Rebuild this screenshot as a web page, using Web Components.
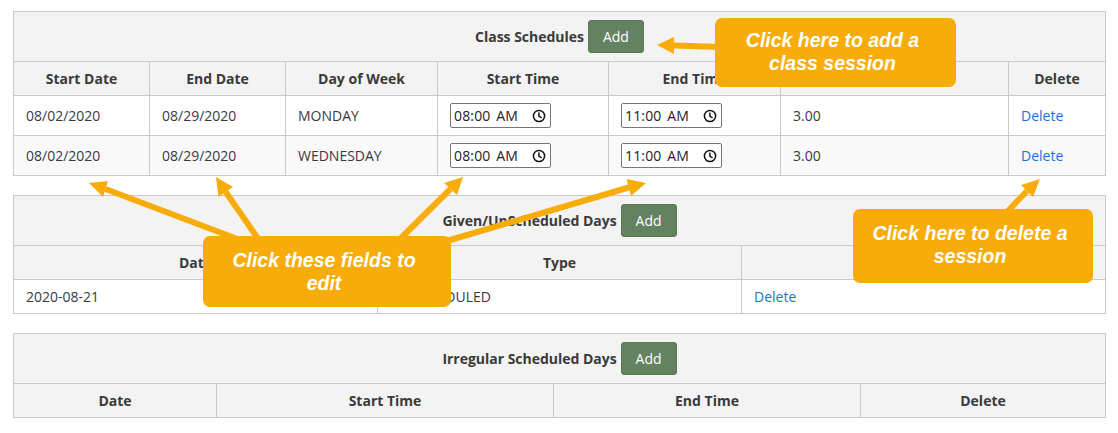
<!DOCTYPE html>
<html lang="en">
<head>
<meta charset="utf-8">
<title>Class Schedules</title>
<style>
	html, body { margin: 0; background: #fff; }
	body { font: 14px/21px "Open Sans", sans-serif; color: #3a3a3a; }
</style>
</head>
<body>
<schedule-page>
	<sched-table heading="Class Schedules" cols="136px 136px 152px 171px 172px 228px 96px">
		<sched-row head>
			<sched-cell>Start Date</sched-cell><sched-cell>End Date</sched-cell><sched-cell>Day of Week</sched-cell><sched-cell>Start Time</sched-cell><sched-cell>End Time</sched-cell><sched-cell>Duration</sched-cell><sched-cell>Delete</sched-cell>
		</sched-row>
		<sched-row>
			<sched-cell>08/02/2020</sched-cell><sched-cell>08/29/2020</sched-cell><sched-cell>MONDAY</sched-cell><sched-cell><time-field>08:00 AM</time-field></sched-cell><sched-cell><time-field>11:00 AM</time-field></sched-cell><sched-cell>3.00</sched-cell><sched-cell><delete-link></delete-link></sched-cell>
		</sched-row>
		<sched-row alt>
			<sched-cell>08/02/2020</sched-cell><sched-cell>08/29/2020</sched-cell><sched-cell>WEDNESDAY</sched-cell><sched-cell><time-field>08:00 AM</time-field></sched-cell><sched-cell><time-field>11:00 AM</time-field></sched-cell><sched-cell>3.00</sched-cell><sched-cell><delete-link></delete-link></sched-cell>
		</sched-row>
	</sched-table>
	<sched-table heading="Given/UnScheduled Days" cols="364px 364px 363px">
		<sched-row head>
			<sched-cell>Date</sched-cell><sched-cell>Type</sched-cell><sched-cell>Delete</sched-cell>
		</sched-row>
		<sched-row>
			<sched-cell>2020-08-21</sched-cell><sched-cell>UNSCHEDULED</sched-cell><sched-cell><delete-link></delete-link></sched-cell>
		</sched-row>
	</sched-table>
	<sched-table heading="Irregular Scheduled Days" cols="203px 337px 307px 244px">
		<sched-row head>
			<sched-cell>Date</sched-cell><sched-cell>Start Time</sched-cell><sched-cell>End Time</sched-cell><sched-cell>Delete</sched-cell>
		</sched-row>
	</sched-table>
	<help-arrows></help-arrows>
	<help-callout style="--x:715px;--y:18px;--w:241px;--h:69px;--pb:2px">Click here to add a class session</help-callout>
	<help-callout style="--x:203px;--y:236px;--w:248px;--h:71px">Click these fields to edit</help-callout>
	<help-callout style="--x:853px;--y:209px;--w:240px;--h:74px;--pb:2px">Click here to delete a session</help-callout>
</schedule-page>

<script>
const html = String.raw;

class SchedulePage extends HTMLElement {
	constructor() {
		super();
		this.attachShadow({ mode: 'open' }).innerHTML = html`
			<style>
				:host {
					display: flex;
					flex-direction: column;
					gap: 19px;
					position: relative;
					width: 1093px;
					height: 422px;
					padding: 11px 12px 0 13px;
				}
			</style>
			<slot></slot>
		`;
	}
}

class SchedTable extends HTMLElement {
	constructor() {
		super();
		this.attachShadow({ mode: 'open' }).innerHTML = html`
			<style>
				:host {
					display: block;
					border: 1px solid #c9c9c9;
					border-bottom: 0;
				}
				.title {
					display: flex;
					justify-content: center;
					align-items: center;
					gap: 4px;
					height: 49px;
					background: #f3f3f3;
					border-bottom: 1px solid #c9c9c9;
					font-weight: 700;
					letter-spacing: -.02px;
				}
				button {
					width: 56px;
					height: 33px;
					padding: 0;
					background: #638260;
					border: 1px solid #5a7758;
					border-radius: 3px;
					color: #fff;
					font: 400 14px/21px "Open Sans", sans-serif;
				}
			</style>
			<div class="title"><span id="heading"></span><button type="button">Add</button></div>
			<slot></slot>
		`;
	}

	connectedCallback() {
		this.shadowRoot.getElementById('heading').textContent = this.getAttribute('heading');
		this.style.setProperty('--cols', this.getAttribute('cols'));
	}
}

class SchedRow extends HTMLElement {
	constructor() {
		super();
		this.attachShadow({ mode: 'open' }).innerHTML = html`
			<style>
				:host {
					display: grid;
					grid-template-columns: var(--cols);
					border-bottom: 1px solid #c9c9c9;
					background: #fff;
					--cell-justify: flex-start;
				}
				:host([alt]) { background: #f9f9f9; }
				:host([head]) {
					background: #f3f3f3;
					font-weight: 700;
					--cell-justify: center;
				}
			</style>
			<slot></slot>
		`;
	}
}

class SchedCell extends HTMLElement {
	constructor() {
		super();
		this.attachShadow({ mode: 'open' }).innerHTML = html`
			<style>
				:host {
					display: flex;
					align-items: center;
					justify-content: var(--cell-justify);
					padding: 6px 12px;
					border-right: 1px solid #c9c9c9;
					min-width: 0;
				}
				:host(:last-child) { border-right: 0; }
			</style>
			<slot></slot>
		`;
	}
}

class TimeField extends HTMLElement {
	constructor() {
		super();
		this.attachShadow({ mode: 'open' }).innerHTML = html`
			<style>
				:host {
					display: flex;
					align-items: center;
					justify-content: space-between;
					box-sizing: border-box;
					width: 101px;
					height: 25px;
					margin: 1px 0;
					padding: 0 4px 0 3px;
					background: #fff;
					border: 1px solid #767676;
					border-radius: 2px;
					color: #222;
					word-spacing: 2px;
					letter-spacing: .15px;
				}
				svg { display: block; flex: none; }
			</style>
			<slot></slot>
			<svg width="14" height="14" viewBox="0 0 14 14" fill="none" stroke="#111" stroke-width="1.5" aria-hidden="true">
				<circle cx="7" cy="7" r="5.6"/>
				<path d="M6.9 3.6V7.2L9.6 9"/>
			</svg>
		`;
	}
}

class DeleteLink extends HTMLElement {
	constructor() {
		super();
		this.attachShadow({ mode: 'open' }).innerHTML = html`
			<style>
				:host { display: inline; }
				a { color: #1a73d4; text-decoration: none; }
			</style>
			<a href="#">Delete</a>
		`;
	}
}

class HelpCallout extends HTMLElement {
	constructor() {
		super();
		this.attachShadow({ mode: 'open' }).innerHTML = html`
			<style>
				:host {
					position: absolute;
					left: var(--x);
					top: var(--y);
					width: var(--w);
					height: var(--h);
					box-sizing: border-box;
					display: flex;
					align-items: center;
					justify-content: center;
					padding: 0 20px var(--pb, 0) 14px;
					background: #f8ac09;
					border-radius: 7px;
					color: #fff;
					font: italic 700 19.5px/23px "Liberation Sans", Arial, sans-serif;
					text-align: center;
				}
			</style>
			<div><slot></slot></div>
		`;
	}
}

// arrow shapes: tip, the two wings, then where the shaft meets the callout
const ARROWS = [
	{ tip: [657, 45], wings: [[674, 37], [674, 54]], tail: [720, 47] },
	{ tip: [89, 183], wings: [[108, 181], [103, 197]], tail: [240, 240] },
	{ tip: [216, 177], wings: [[233, 187], [218.5, 197]], tail: [259, 240] },
	{ tip: [463, 177], wings: [[444, 183], [457, 195]], tail: [399, 240] },
	{ tip: [646, 183], wings: [[626.5, 179], [631, 196]], tail: [440, 243] },
	{ tip: [1040, 179], wings: [[1021, 185], [1033, 197]], tail: [1005, 214] }
];

class HelpArrows extends HTMLElement {
	constructor() {
		super();
		const shapes = ARROWS.map(({ tip, wings, tail }) => {
			const mid = [(wings[0][0] + wings[1][0]) / 2, (wings[0][1] + wings[1][1]) / 2];
			return html`
				<line x1="${mid[0]}" y1="${mid[1]}" x2="${tail[0]}" y2="${tail[1]}" stroke="#f8ac09" stroke-width="6"/>
				<polygon points="${tip.join()} ${wings[0].join()} ${wings[1].join()}" fill="#f8ac09"/>
			`;
		}).join('');
		this.attachShadow({ mode: 'open' }).innerHTML = html`
			<style>
				:host {
					position: absolute;
					inset: 0;
					pointer-events: none;
				}
				svg { display: block; }
			</style>
			<svg width="1118" height="433" viewBox="0 0 1118 433" aria-hidden="true">${shapes}</svg>
		`;
	}
}

customElements.define('schedule-page', SchedulePage);
customElements.define('sched-table', SchedTable);
customElements.define('sched-row', SchedRow);
customElements.define('sched-cell', SchedCell);
customElements.define('time-field', TimeField);
customElements.define('delete-link', DeleteLink);
customElements.define('help-callout', HelpCallout);
customElements.define('help-arrows', HelpArrows);
</script>
</body>
</html>
